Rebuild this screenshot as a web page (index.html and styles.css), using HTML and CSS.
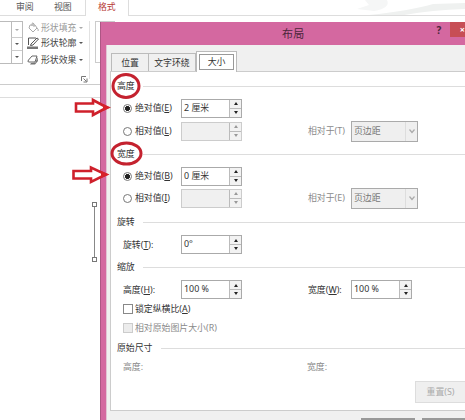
FILE: index.html
```
<!DOCTYPE html>
<html>
<head>
<meta charset="utf-8">
<title>布局</title>
<link rel="stylesheet" href="styles.css">
</head>
<body>
<div class="app">
  <nav class="tabs"><span class="t1">审阅</span><span class="t2">视图</span><span class="t3">格式</span><span class="rest"><svg width="337" height="16"><path d="M228 9L240 5L236 0H258Q262 8 245 11Z" fill="#f5f6f6"/><path d="M240 15Q280 11 304 4L337 3V9Q300 10 270 16Z" fill="#eff1f0"/></svg></span></nav>
  <div class="ribbon">
    <div class="gallery"><i></i><i></i><i></i></div>
    <div class="tools">
      <div class="tool off"><svg width="13" height="12" viewBox="0 0 13 12"><path d="M3 3L8 3L10 6L6 10L2 6ZM5 4V1.500Q6 0 7 2V5M10 6Q12 8 11 9" fill="none" stroke="#aaa"/></svg><span>形状填充</span><b></b></div>
      <div class="tool"><svg width="13" height="12" viewBox="0 0 13 12"><path d="M9 1H1.500V8M4 7L10 1L11.500 2L6 8L3.500 8.500Z" fill="none" stroke="#555"/><path d="M0 9.500H11V12H0Z" fill="#777"/></svg><span>形状轮廓</span><b></b></div>
      <div class="tool"><svg width="13" height="12" viewBox="0 0 13 12"><path d="M5 2H10L8 8H2Q0 8 1.500 6Z" fill="#fff" stroke="#666"/><path d="M10.500 3L11 7L8 10.500H3L4 9L8.500 8.500Z" fill="#777"/></svg><span>形状效果</span><b></b></div>
    </div>
    <svg class="launcher" width="7" height="7" viewBox="0 0 7 7"><path d="M.5 5V.5H5M2.500 2.500L5.500 5.500M6 2.500V6H2.500" fill="none" stroke="#777"/></svg>
    <div class="divider"></div>
    <div class="group"></div>
  </div>
  <div class="strip"></div>
</div>

<svg class="shape" width="7" height="62" viewBox="0 0 7 62"><path d="M3.500 5V57" stroke="#888"/><rect x="1.500" y="-.5" width="4" height="4" transform="translate(0 1)" fill="#fff" stroke="#777"/><rect x="1.500" y="55.500" width="4" height="4" fill="#fff" stroke="#777"/></svg>

<div class="dialog">
  <div class="title"><span class="name">布局</span><span class="help">?</span><span class="close">×</span></div>
  <div class="body">
    <div class="dtabs"><span class="a">位置</span><span class="b">文字环绕</span><span class="c"><em>大小</em></span></div>
    <div class="panel">
      <div class="head h22">高度</div>
      <div class="row h22"><i class="radio on"></i><label>绝对值(<u>E</u>)</label><div class="spin"><span>2 厘米</span><i></i></div></div>
      <div class="row h24"><i class="radio"></i><label>相对值(<u>L</u>)</label><div class="spin dis"><span></span><i></i></div><label class="side gray">相对于(T)</label><div class="select"><span>页边距</span><svg width="12" height="18"><path d="M3.500 7.500L6 10.500L8.500 7.500" fill="none" stroke="#aaa" stroke-width="1.200"/></svg></div></div>
      <div class="head h22">宽度</div>
      <div class="row h22"><i class="radio on"></i><label>绝对值(<u>B</u>)</label><div class="spin"><span>0 厘米</span><i></i></div></div>
      <div class="row h22"><i class="radio"></i><label>相对值(<u>I</u>)</label><div class="spin dis"><span></span><i></i></div><label class="side gray">相对于(E)</label><div class="select"><span>页边距</span><svg width="12" height="18"><path d="M3.500 7.500L6 10.500L8.500 7.500" fill="none" stroke="#aaa" stroke-width="1.200"/></svg></div></div>
      <div class="head h26">旋转</div>
      <div class="row h19"><label class="wide">旋转(<u>T</u>):</label><div class="spin"><span>0°</span><i></i></div></div>
      <div class="head h26">缩放</div>
      <div class="row h19"><label class="wide">高度(<u>H</u>):</label><div class="spin"><span>100 %</span><i></i></div><label class="side">宽度(<u>W</u>):</label><div class="spin"><span>100 %</span><i></i></div></div>
      <div class="row h20"><i class="check"></i><label class="long">锁定纵横比(<u>A</u>)</label></div>
      <div class="row h17"><i class="check dis"></i><label class="long gray">相对原始图片大小(R)</label></div>
      <div class="head h24">原始尺寸</div>
      <div class="row h14 gray"><label class="wide">高度:</label><label class="size">宽度:</label></div>
      <div class="reset"><button>重置(S)</button></div>
    </div>
    <div class="foot"><i></i><i></i></div>
  </div>
</div>

<svg class="marks" width="465" height="420"><g fill="none" stroke="#c4222f" stroke-width="3"><ellipse cx="126" cy="86" rx="13" ry="11.500"/><ellipse cx="126.500" cy="153.500" rx="14.500" ry="10.500"/></g><g fill="#fff" stroke="#cf202b" stroke-width="2.600"><path d="M76 103.500H93V100L107 107.500L93 115V111.500H76Z"/><path d="M73.500 171H91V167.500L106 174.500L91 182V178.500H73.500Z"/></g><path d="M103 104L111 107.500L103 111ZM101 171L109.500 174.500L101 178Z" fill="#d7212b"/></svg>
</body>
</html>
```
FILE: styles.css
```
* { box-sizing: border-box; }
body { margin: 0; width: 465px; height: 420px; overflow: hidden; position: relative; background: #fff; color: #333; font: 8.9px/12px "Noto Sans", "Noto Sans CJK SC", sans-serif; }
i, em { font-style: normal; }
svg { display: block; flex: none; }
u { text-decoration-thickness: 1px; text-underline-offset: 1px; }
.tabs { display: flex; height: 16px; line-height: 14px; color: #555; }
.t1, .t2, .t3 { border-bottom: 1px solid #ddd; flex: none; }
.t1 { width: 54px; padding-left: 16px; }
.t2 { width: 31px; }
.tabs .t3 { width: 44px; padding-left: 12px; color: #b83b36; border: solid #ddd; border-width: 0 1px; }
.rest { flex: 1; overflow: hidden; border-bottom: 1px solid #ddd; }
.ribbon { display: flex; height: 69px; padding-top: 5px; border-bottom: 1px solid #ccc; }
.gallery { width: 23px; height: 43px; border: 1px solid #bbb; border-left: 0; display: grid; grid-template-rows: 16px 13px 12px; justify-content: end; }
.gallery i { width: 11px; border-left: 1px solid #bbb; border-bottom: 1px solid #ccc; display: grid; place-items: center; }
.gallery i::after, .tool b { content: ""; border: 2px solid transparent; border-top-color: #555; border-bottom: 0; }
.gallery i:first-child::after, .tool.off b { border-top-color: #aaa; }
.gallery i:last-child { border-bottom: 0; }
.tools { width: 57px; margin-left: 4px; }
.tool { display: flex; height: 16.500px; align-items: center; color: #444; width: 57px; }
.tool span { margin-left: 1px; white-space: nowrap; }
.tool b { margin-left: 2px; flex: none; }
.tool.off { color: #999; height: 14px; }
.launcher { margin: 55px 0 0 -3px; }
.divider { width: 1px; height: 58px; margin-left: 1px; background: #e2e2e2; }
.group { width: 20px; height: 42px; margin-left: 5px; border: 1px solid #ccc; }
.strip { height: 13px; border-bottom: 1px solid #ddd; }
.shape { position: absolute; left: 91px; top: 202px; }
.dialog { position: absolute; left: 100px; top: 22px; width: 365px; height: 398px; overflow: hidden; background: #d468a0; border-left: 1px solid #ad5684; padding-left: 5px; }
.title { height: 23px; display: flex; color: #4b263b; }
.name { flex: none; width: 152px; margin-left: 176px; font-size: 11px; line-height: 23px; letter-spacing: .3px; margin-right: -24px; }
.help { width: 24px; margin-left: 17px; font-weight: 700; font-size: 10px; line-height: 17px; text-align: center; margin-right: -1px; }
.close { flex: 1; height: 15px; background: #c74e55; color: #fff; font-size: 9px; font-weight: 700; line-height: 15px; text-align: right; }
.body { height: 375px; background: #f0f0f0; border-left: 1px solid #e2c4d4; padding: 6px 0 0 3px; }
.dtabs { display: flex; align-items: flex-end; height: 20px; padding-left: 1px; }
.dtabs span { height: 18px; border: 1px solid #bbb; border-bottom: 0; line-height: 18px; text-align: center; }
.a { width: 38px; }
.dtabs .b { width: 47px; border-left: 0; }
.dtabs .c { width: 41px; height: 21px; background: #fff; padding: 2px; margin-bottom: -1px; z-index: 1; }
.c em { display: block; height: 16px; border: 1px solid #999; line-height: 13px; }
.panel { height: 340px; background: #fff; border: 1px solid #ccc; border-right: 0; padding: 3px 0 0 6px; }
.head { display: flex; align-items: center; gap: 8px; }
.head::after { content: ""; flex: 1; height: 1px; background: #ddd; }
.row { display: flex; align-items: center; padding-left: 6px; }
.h14 { height: 14px; } .h17 { height: 17px; } .h19 { height: 19px; } .h20 { height: 20px; }
.h22 { height: 22px; } .h24 { height: 24px; } .h26 { height: 26px; }
.radio { width: 9px; height: 9px; border: 1px solid #777; border-radius: 50%; margin-right: 3px; flex: none; }
.radio.on { background: radial-gradient(circle, #222 2.200px, #fff 2.800px); }
label { width: 46px; flex: none; white-space: nowrap; }
label.wide { width: 58px; }
label.long { width: auto; }
.row label.side { width: 43px; margin-left: 66px; }
.row label.size { margin-left: 126px; }
.gray { color: #8a8a8a; }
.spin { width: 61px; height: 19px; border: 1px solid #aaa; display: flex; justify-content: space-between; padding-left: 2px; flex: none; line-height: 15px; }
.spin i { width: 12px; display: grid; grid-template-rows: 1fr 1fr; place-items: center; border-left: 1px solid #bbb; background: linear-gradient(#bbb, #bbb) 0 8px / 100% 1px no-repeat #f2f2f2; }
.spin i::before, .spin i::after { content: ""; border: 2px solid transparent; }
.spin i::before { border-bottom: 3px solid #222; border-top: 0; }
.spin i::after { border-top: 3px solid #222; border-bottom: 0; }
.spin.dis { background: #f0f0f0; border-color: #ccc; }
.spin.dis i::before { border-bottom-color: #999; }
.spin.dis i::after { border-top-color: #999; }
.select { width: 67px; height: 21px; flex: none; border: 1px solid #aaa; background: #efefef; display: flex; justify-content: space-between; padding-left: 2px; line-height: 18px; color: #777; }
.select svg { border-left: 1px solid #ddd; height: 19px; }
.check { width: 10px; height: 10px; border: 1px solid #888; margin-right: 2px; }
.check.dis { background: #ececec; border-color: #ccc; }
.reset { display: flex; justify-content: flex-end; padding-top: 7px; }
.reset button { width: 50px; height: 22px; margin-right: 0; padding: 0; background: #efefef; border: 1px solid #ddd; border-right: 0; color: #aaa; font: inherit; }
.foot { display: flex; gap: 7px; padding: 7px 0 0 251px; }
.foot i { width: 54px; height: 2px; background: #999; flex: none; }
.marks { position: absolute; left: 0; top: 0; }
```
